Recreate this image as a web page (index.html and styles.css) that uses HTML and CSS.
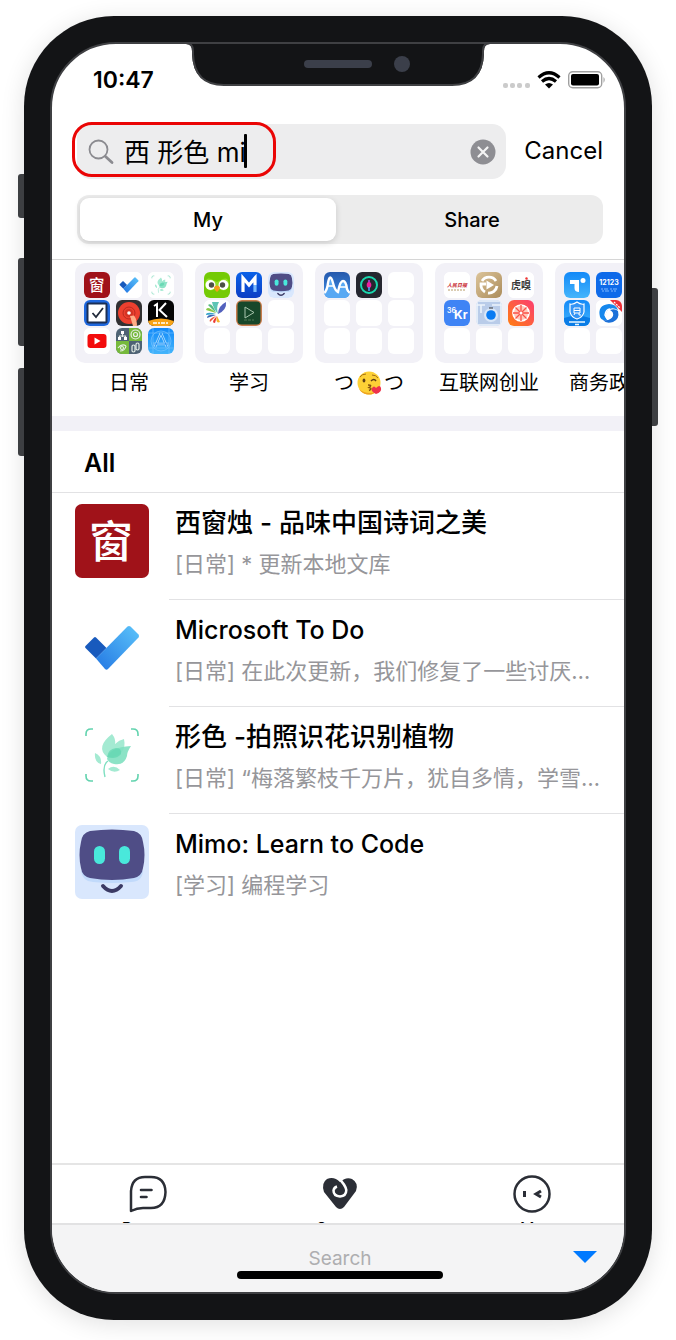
FILE: index.html
```html
<!DOCTYPE html>
<html lang="zh-CN">
<head>
<meta charset="utf-8">
<meta name="viewport" content="width=device-width, initial-scale=1">
<title>Search</title>
<link rel="stylesheet" href="styles.css">
</head>
<body>
<svg class="defs" aria-hidden="true">
  <defs>
    <linearGradient id="g-check" x1="0" y1="1" x2="1" y2="0"><stop offset="0" stop-color="#2377e3"/><stop offset="1" stop-color="#5cc4fa"/></linearGradient>
    <linearGradient id="g-blue" x1="0" y1="0" x2="0" y2="1"><stop offset="0" stop-color="#0b62e8"/><stop offset="1" stop-color="#0c3ec4"/></linearGradient>
    <linearGradient id="g-sky" x1="0" y1="0" x2="0" y2="1"><stop offset="0" stop-color="#1289f8"/><stop offset="1" stop-color="#45b5fb"/></linearGradient>
    <linearGradient id="g-gold" x1="0" y1="0" x2="1" y2="1"><stop offset="0" stop-color="#dcc49a"/><stop offset="1" stop-color="#ab8c5b"/></linearGradient>
    <linearGradient id="g-orange" x1="1" y1="0" x2="0" y2="1"><stop offset="0" stop-color="#fc3d71"/><stop offset="1" stop-color="#ff7e12"/></linearGradient>
    <linearGradient id="g-navy" x1="0" y1="0" x2="0" y2="1"><stop offset="0" stop-color="#2558ab"/><stop offset="1" stop-color="#3f91ea"/></linearGradient>
  </defs>
  <symbol id="i-window" viewBox="0 0 74 74">
    <rect width="74" height="74" rx="7" fill="#a01219"/>
    <text class="seal" x="36" y="54" text-anchor="middle">窗</text>
  </symbol>
  <symbol id="i-todo" viewBox="0 0 74 74">
    <rect width="74" height="74" rx="7" fill="#fff"/>
    <g transform="translate(0 6)">
      <path d="M10.500 31q-1-1 0-2l8.500-8.500q1-1 2 0L31.500 31 21 41.500z" fill="#185abd"/>
      <path d="M21 41.500 52.500 9.500q1.500-1.200 3 0l8 8q1.200 1.500 0 3L33 52q-1.500 1.500-3 0z" fill="url(#g-check)"/>
    </g>
  </symbol>
  <symbol id="i-flower" viewBox="0 0 74 74">
    <rect width="74" height="74" rx="7" fill="#fff"/>
    <path d="M11 18v-2q0-5 5-5h2M56 11h2q5 0 5 5v2M11 56v2q0 5 5 5h2M56 63h2q5 0 5-5v-2" fill="none" stroke="#62d3ae" stroke-width="1.600"/>
    <path d="M32 39Q20 29 37 16q4 5 3 10 4-4 9-5 2 9-3 14-6 5-14 4z" fill="#a4ead2"/>
    <path d="M32 41Q34 29 56 28q-4 6-4 10-3 10-13 8-5-1-7-5z" fill="#7fe0c0" opacity=".9"/>
    <path d="M32 39q1-8 9-9 6 0 5 6-5 6-14 3z" fill="#5fd6af" opacity=".7"/>
    <path d="M33 43Q27 47 30 59" fill="none" stroke="#7edfc0" stroke-width="1.400"/>
    <path d="M20 35q7 3 6 11-7-2-6-11zM33 51q6-5 12 1-6 4-12-1z" fill="#a4ead2"/>
  </symbol>
  <symbol id="i-mimo" viewBox="0 0 74 74">
    <rect width="74" height="74" rx="7" fill="#d9e7fd"/>
    <path d="M6 46h62q-1 11-12 11-19 2-38 0Q8 57 6 46z" fill="#c1dafb"/>
    <path d="M15 6Q37 3 59 6 67 8 68 17 71 30 68 43 67 51 59 53 37 57 15 53 7 51 6 43 3 30 6 17 7 8 15 6z" fill="#4f4d86"/>
    <rect x="19" y="21" width="11" height="18" rx="5.500" fill="#49e8db"/>
    <rect x="44" y="21" width="11" height="18" rx="5.500" fill="#49e8db"/>
    <path d="M28 61q9 10 18 0" fill="none" stroke="#3b3a64" stroke-width="4" stroke-linecap="round"/>
  </symbol>
</svg>

<div class="phone">
  <i class="key key-mute"></i><i class="key key-up"></i><i class="key key-down"></i><i class="key key-power"></i>
  <div class="screen">
    <svg class="notch" viewBox="0 0 308 46" aria-hidden="true">
      <path d="M0 0V2H2Q8 2 8 9V12Q9 43 40 43H268Q299 43 300 12V9Q300 2 306 2H308V0z" fill="#131416"/>
      <path d="M0 1H2Q9 1 9 9V12Q10 43 40 43H268Q298 43 299 12V9Q299 1 306 1H308" fill="none" stroke="#3f4043" stroke-width="2"/>
      <rect x="120" y="18" width="68" height="8" rx="4" fill="#3b3f4a"/>
      <circle cx="218" cy="22" r="8" fill="#3b3f4a"/>
    </svg>

    <header class="status">
      <time>10:47</time>
      <svg width="104" height="20" viewBox="0 0 104 20" role="img" aria-label="Wi-Fi, battery full">
        <g fill="#cbcbcb"><rect x="0" y="13" width="5" height="5" rx="2"/><rect x="7" y="13" width="5" height="5" rx="2"/><rect x="14" y="13" width="5" height="5" rx="2"/><rect x="22" y="13" width="5" height="5" rx="2"/></g>
        <g fill="none" stroke="#000" stroke-width="3.200"><path d="M35.500 7.500Q46-2 56.500 7.500"/><path d="M39 11.500q7-6 14 0"/></g>
        <path d="M42 14.500q4-3 8 0L46 18.500z"/>
        <rect x="65.700" y="1.700" width="33" height="16" rx="4" fill="none" stroke="#a0a0a0" stroke-width="1.400"/>
        <rect x="68" y="4" width="28" height="11.500" rx="2"/>
        <path d="M100.500 7q2.500 2.500 0 6z" fill="#a0a0a0"/>
      </svg>
    </header>

    <form class="search" onsubmit="return false">
      <div class="field">
        <svg width="26" height="26" viewBox="0 0 26 26" fill="none" stroke="#8b8b90" aria-hidden="true"><circle cx="10.500" cy="10.500" r="9" stroke-width="1.800"/><path d="m17.500 17.500 6.500 6" stroke-width="2.800" stroke-linecap="round"/></svg>
        <input class="query" type="text" value="西 形色 mi" aria-label="Search apps">
        <button class="clear" type="button" aria-label="Clear"><svg width="26" height="26" viewBox="0 0 26 26"><circle cx="13" cy="13" r="12.500" fill="#8e8e93"/><path d="m8.500 8.500 9 9m0-9-9 9" stroke="#f4f4f4" stroke-width="2.200" stroke-linecap="round"/></svg></button>
        <i class="caret"></i>
        <i class="mark"></i>
      </div>
      <button class="cancel" type="button">Cancel</button>
    </form>

    <div class="segments">
      <button class="segment selected" type="button" aria-pressed="true">My</button>
      <button class="segment" type="button" aria-pressed="false">Share</button>
    </div>

    <nav class="folders" aria-label="Folders">
      <button class="folder" type="button">
        <span class="tiles">
          <svg><use href="#i-window"/></svg>
          <svg><use href="#i-todo"/></svg>
          <svg><use href="#i-flower"/></svg>
          <svg viewBox="0 0 26 26"><rect width="26" height="26" fill="#1e67dd"/><rect x="3.500" y="3.500" width="19" height="19" rx="1" fill="#fff" stroke="#1b2f55" stroke-width="2"/><path d="m8.500 13 3.500 4 7-9" fill="none" stroke="#222b3b" stroke-width="1.800"/></svg>
          <svg viewBox="0 0 26 26"><rect width="26" height="26" fill="#313032"/><circle cx="13" cy="13" r="11" fill="#ec402f"/><circle cx="13" cy="13" r="6" fill="none" stroke="#b92a20"/><circle cx="13" cy="13" r="4" fill="#d23325"/><circle cx="13" cy="13" r="1.800" fill="#fff"/><path d="m14 16 4-.5q3 4 3 10.500h-4z" fill="#ffae87"/></svg>
          <svg viewBox="0 0 26 26"><rect width="26" height="26" fill="#050505"/><path d="M6 6 9 4V17M18 3l-6.500 7L19 17" fill="none" stroke="#fff" stroke-width="2"/><path d="M0 21q13-5 26 0v5H0z" fill="#f8a417"/><path d="M5 23h16" stroke="#fff" stroke-width="1.500" stroke-dasharray="4 1 2 1"/></svg>
          <svg viewBox="0 0 26 26"><rect width="26" height="26" fill="#fff"/><rect x="3.500" y="6" width="19" height="14" rx="3" fill="#f30c0c"/><path d="m10.500 9.500 6 3.500-6 3.500z" fill="#fff"/></svg>
          <svg viewBox="0 0 26 26"><rect width="26" height="26" fill="#4e6274"/><path d="M13 0h13v13H13zM0 13h13v13H0z" fill="#76b93c"/><g fill="none" stroke="#e6eee6" stroke-width="1.200"><path d="M6.500 5v4M3.500 10V8h6v2"/><circle cx="19.500" cy="6.500" r="4.500"/><circle cx="19.500" cy="6.500" r="2"/><path d="M2 20q4-5 8-2M4 23q5 0 6-5"/><circle cx="6" cy="20" r="1.500"/><rect x="16" y="17" width="3" height="7" rx="1.500"/><rect x="20" y="15" width="3" height="7" rx="1.500"/></g><path d="M5 3h3v3H5zM2 9h3v3H2zM8 9h3v3H8z" fill="#fff"/></svg>
          <svg viewBox="0 0 26 26"><rect width="26" height="26" fill="url(#g-sky)"/><path d="M0 5h26M0 20h26M5 0v26M21 0v26" stroke="#78c4ff" stroke-width=".6"/><circle cx="13" cy="13" r="10" fill="none" stroke="#78c4ff" stroke-width=".7"/><path d="M13 5 7 19M13 5l6 14M5 16h16" fill="none" stroke="#a9dcff" stroke-width="2.600"/><path d="M13 5 7 19M13 5l6 14M5 16h16" fill="none" stroke="#2792f5"/></svg>
        </span>
        <span class="name">日常</span>
      </button>

      <button class="folder" type="button">
        <span class="tiles">
          <svg viewBox="0 0 26 26"><rect width="26" height="26" fill="#74ca05"/><path d="M1 12Q2 5 7 7l6 3 6-3q5-2 6 5-1 8-8 6l-4-2-4 2q-7 2-8-6z" fill="#95e126"/><circle cx="6.500" cy="13" r="5" fill="#fff"/><circle cx="19.500" cy="13" r="5" fill="#fff"/><circle cx="7.500" cy="13" r="2.700" fill="#4b5145"/><circle cx="18.500" cy="13" r="2.700" fill="#4b5145"/><path d="M10 15q3-3 6 0l-1 3-2 2-2-2z" fill="#f89b1c"/></svg>
          <svg viewBox="0 0 26 26"><rect width="26" height="26" fill="url(#g-blue)"/><path d="M7 20V6l6 7 6-7v7" fill="none" stroke="#fff" stroke-width="3.200"/><path d="M19 13v7" stroke="#79b9ff" stroke-width="3.200"/></svg>
          <svg><use href="#i-mimo"/></svg>
          <svg viewBox="0 0 26 26"><rect width="26" height="26" fill="#fff"/><path d="M8 2h7q-3 5-1 12Q9 8 8 2z" fill="#5dc5b5"/><path d="M14 14q0-8 8-12 1 8-8 12z" fill="#5361bd"/><path d="M12 13 4 5q4-3 8 8z" fill="#56bc83"/><path d="m12 13-10-3q1-5 10 3z" fill="#89c947"/><path d="m12 14-10 1q0-4 10-1z" fill="#36a4cb"/><path d="m12 15-9 3q0-4 9-3z" fill="#3a66b5"/><path d="m12 16-6 6q-2-3 6-6z" fill="#ed563b"/><path d="m13 16-2 7q-5 0 2-7z" fill="#ec3832"/><path d="m13 16 3 6q-5 2-3-6z" fill="#f4b32f"/></svg>
          <svg viewBox="0 0 26 26"><rect width="26" height="26" fill="#c87c4c"/><rect x="1.500" y="1.500" width="23" height="23" rx="4" fill="#17472a"/><path d="M9 7v11l9-5.500z" fill="none" stroke="#a8c5ad"/><path d="M8 20h10" stroke="#537a57" stroke-dasharray="3 1"/></svg>
          <i></i><i></i><i></i><i></i>
        </span>
        <span class="name">学习</span>
      </button>

      <button class="folder" type="button">
        <span class="tiles">
          <svg viewBox="0 0 26 26"><rect width="26" height="26" fill="url(#g-navy)"/><path d="M0 21q3 0 4-9 2-12 5 0 2 9 5 9 2-13 5-12 3-1 4 12h3v5H0z" fill="#58a8f3"/><path d="M0 21Q3 19 4 11q2-11 5 0 2 8 5 9 2-11 5-11t4 8q1 3 3 4" fill="none" stroke="#fff" stroke-width="2.400"/><path d="M4 14h6M16 15h7" stroke="#fff" stroke-width="1.300"/></svg>
          <svg viewBox="0 0 26 26"><rect width="26" height="26" fill="#25262f"/><circle cx="13" cy="13" r="8" fill="none" stroke="#19d7ae" stroke-width="2"/><path d="M13 8v4" stroke="#b04bec" stroke-width="1.500"/><ellipse cx="13" cy="13" rx="2.300" ry="3" fill="#ed209b"/><path d="M13 15v4" stroke="#4aa5ff" stroke-width="1.500"/></svg>
          <i></i><i></i><i></i><i></i><i></i><i></i><i></i>
        </span>
        <span class="name">つ<svg class="kiss" viewBox="0 0 26 26" role="img" aria-label="😘"><circle cx="13" cy="13" r="11.500" fill="#fdd136"/><path d="M3 19a11.500 11.500 0 0 0 17 3Q10 25 3 19z" fill="#eea321"/><path d="M4 7q2-3 6-3M16 5q4 0 6 3" fill="none" stroke="#a46d15"/><ellipse cx="8" cy="10.500" rx="1.400" ry="2" fill="#5f3f18"/><path d="M15 11q3-3 5 0" fill="none" stroke="#5f3f18" stroke-width="1.500"/><path d="M12 15q5 0 1 2.500 4 1 0 3" fill="none" stroke="#83500e" stroke-width="1.400"/><path d="M20 24q-6-3-4-6t4 0q4-4 5 0t-5 6z" fill="#ee334c"/></svg>つ</span>
      </button>

      <button class="folder" type="button">
        <span class="tiles">
          <svg viewBox="0 0 26 26"><rect width="26" height="26" fill="#fff"/><text class="brush" x="13" y="15" text-anchor="middle">人民日报</text><path d="M4 18h18" stroke="#b79b69" stroke-dasharray="2 1"/></svg>
          <svg viewBox="0 0 26 26"><rect width="26" height="26" fill="url(#g-gold)"/><path d="M6 9a8.300 8.300 0 0 1 14 0M21 14a8.300 8.300 0 0 1-9 7M9 20a8.300 8.300 0 0 1-4-8h5" fill="none" stroke="#fff" stroke-width="2.800"/><path d="m10.500 8.500 7.500 4.500-7.500 4.500z" fill="#fff"/></svg>
          <svg viewBox="0 0 26 26"><rect width="26" height="26" fill="#fff"/><text class="tiger" x="13" y="17" text-anchor="middle">虎嗅</text><circle cx="18.500" cy="6.500" r="1.200" fill="#e33"/></svg>
          <svg viewBox="0 0 26 26"><rect width="26" height="26" fill="#3f84f5"/><text class="kr-small" x="3" y="13">36</text><text class="kr" x="10" y="19">Kr</text></svg>
          <svg viewBox="0 0 26 26"><rect width="26" height="26" fill="#b9cce9"/><path d="M0 5h9M16 5h10M5 5v8M1 1h24v24H1z" fill="none" stroke="#edf4fc" stroke-width="1.600"/><circle cx="15" cy="15" r="7" fill="#dae7f8"/><circle cx="15" cy="15" r="4.800" fill="#097bf2"/><path d="M13 8h4" stroke="#333" /></svg>
          <svg viewBox="0 0 26 26"><rect width="26" height="26" fill="url(#g-orange)"/><circle cx="13" cy="13" r="8" fill="#ffc9bb" stroke="#fff" stroke-width="1.700"/><path d="M13 5v16M5 13h16M7.500 7.500l11 11m0-11-11 11" stroke="#fa5148" stroke-width="1.300"/><circle cx="13" cy="13" r="1.500" fill="#fff"/></svg>
          <i></i><i></i><i></i>
        </span>
        <span class="name">互联网创业</span>
      </button>

      <button class="folder" type="button">
        <span class="tiles">
          <svg viewBox="0 0 26 26"><rect width="26" height="26" fill="url(#g-sky)"/><path d="M6 8h9v4H6zM10.500 9h4.500v11q-4.500 0-4.500-4z" fill="#fff"/><circle cx="19" cy="8.500" r="2.500" fill="#fff"/></svg>
          <svg viewBox="0 0 26 26"><rect width="26" height="26" fill="#0e6ae9"/><text class="digits" x="13" y="13" text-anchor="middle">12123</text><path d="M5 17h16M6 19h14" stroke="#80b8ff" stroke-dasharray="2 1 4 2"/></svg>
          <i></i>
          <svg viewBox="0 0 26 26"><rect width="26" height="26" fill="url(#g-sky)"/><path d="M0 18q13-5 26 0v8H0z" fill="#0a7ce6"/><path d="M13 2q4 3 7 2v8q-1 5-7 7-6-2-7-7V4q3 1 7-2z" fill="#3394f5" stroke="#fff" stroke-width="1.200"/><path d="M10 8h6v5h-6zM10 10.500h6M11 13l-1 2M15 13v2h2" fill="none" stroke="#fff"/><path d="M5 22h16M11 24.500h4" stroke="#e9f6ff" stroke-width="1.600"/></svg>
          <svg viewBox="0 0 26 26"><rect width="26" height="26" fill="#fff"/><path d="M4 17Q1 5 13 4q7 0 9 6-7-4-11 1-3 4 0 9-5 1-7-3z" fill="#1688ed"/><path d="M22 11q2 8-5 11-7 2-10-2 8 1 10-4 1-4-3-6 5-2 8 1z" fill="#1c71d9"/><path d="M14 9q-4 0-5 6 1 3 3 4" fill="none" stroke="#fff" stroke-width="1.500"/><path d="M14 0h12v12z" fill="#ed3039"/><path d="m18 2 6 6" stroke="#fff" stroke-width="1.300" stroke-dasharray="2 1"/></svg>
          <i></i><i></i><i></i><i></i>
        </span>
        <span class="name">商务政务</span>
      </button>
    </nav>

    <main class="results">
      <h1>All</h1>
      <ul>
        <li>
          <svg class="app"><use href="#i-window"/></svg>
          <div class="info"><h2>西窗烛 - 品味中国诗词之美</h2><p>[日常] * 更新本地文库</p></div>
        </li>
        <li>
          <svg class="app"><use href="#i-todo"/></svg>
          <div class="info"><h2 class="latin">Microsoft To Do</h2><p>[日常] 在此次更新，我们修复了一些讨厌…</p></div>
        </li>
        <li>
          <svg class="app"><use href="#i-flower"/></svg>
          <div class="info"><h2>形色 -拍照识花识别植物</h2><p>[日常] “梅落繁枝千万片，犹自多情，学雪…</p></div>
        </li>
        <li>
          <svg class="app"><use href="#i-mimo"/></svg>
          <div class="info"><h2 class="latin">Mimo: Learn to Code</h2><p>[学习] 编程学习</p></div>
        </li>
      </ul>
    </main>

    <nav class="tabs" aria-label="Sections">
      <a href="#recent"><svg width="40" height="40" viewBox="0 0 40 40" fill="none" stroke="#2b2e36"><path d="M3 37V17Q4 3 17 3h6Q37 3 37.500 18 37 34 23 34h-8q-6 0-12 3z" stroke-width="2.500" stroke-linejoin="round"/><path d="M13 16h10.500M13 23h5.500" stroke-width="2.600" stroke-linecap="round"/></svg><span>Recent</span></a>
      <a href="#space"><svg width="40" height="40" viewBox="0 0 40 40"><path d="M20 8Q26 2.500 32 5q7 4 4 12L24 33q-4 4-8 0L4 18Q1 9 7 5q7-3 13 3z" fill="#2b2e36"/><path d="M18 3.500Q25.500 11 26.300 16q0 6-6.300 6.500-6.500-.5-6.500-6 .5-3 3.500-4" fill="none" stroke="#fff" stroke-width="2.500"/></svg><span>Space</span></a>
      <a href="#me"><svg width="40" height="40" viewBox="0 0 40 40" fill="none" stroke="#2b2e36"><circle cx="20" cy="20" r="17.500" stroke-width="2.500"/><path d="M12.500 17v6" stroke-width="3"/><path d="m29 17-5 3 5 3" stroke-width="3"/></svg><span>Me</span></a>
    </nav>

    <footer class="toolbar">
      <span class="hint">Search</span>
      <button class="dismiss" type="button" aria-label="Hide keyboard"><svg width="24" height="12" viewBox="0 0 24 12"><path d="M0 0h24L12 12z" fill="#007aff"/></svg></button>
      <i class="home"></i>
    </footer>
  </div>
</div>
</body>
</html>
```
FILE: styles.css
```css
* { box-sizing: border-box; }

body {
  margin: 0;
  min-height: 100vh;
  display: flex;
  flex-direction: column;
  padding: 16px 24px 20px;
  background: #fff;
  color: #000;
  font-family: Inter, "Noto Sans CJK SC", sans-serif;
}

button, input { font: inherit; color: inherit; border: 0; padding: 0; background: none; }
h1, h2, p, ul { margin: 0; padding: 0; }

.defs { position: absolute; width: 0; height: 0; }

.phone {
  position: relative;
  flex: 1;
  display: flex;
  padding: 26px;
  border-radius: 90px;
  background: #131416;
  box-shadow: 0 4px 24px rgba(0, 0, 0, 0.12);
}

.key { position: absolute; width: 6px; background: #3d3f42; border-radius: 3px 0 0 3px; left: -6px; }
.key-mute { top: 158px; height: 44px; }
.key-up { top: 242px; height: 88px; }
.key-down { top: 352px; height: 88px; }
.key-power { top: 272px; height: 138px; left: auto; right: -6px; border-radius: 0 3px 3px 0; }

.screen {
  position: relative;
  flex: 1;
  min-width: 0;
  display: flex;
  flex-direction: column;
  overflow: hidden;
  border: 2px solid #3f4043;
  border-radius: 66px;
  background: #fff;
}

.notch { position: absolute; top: -2px; left: 50%; width: 308px; height: 46px; margin-left: -154px; }

.status {
  height: 80px;
  padding: 24px 17px 0 41px;
  display: flex;
  justify-content: space-between;
  align-items: flex-start;
}
.status time { font-size: 23px; line-height: 24px; font-weight: 600; }
.status svg { margin-top: 2px; }

.search { display: flex; align-items: center; gap: 18px; padding: 0 21px 0 25px; }
.field {
  position: relative;
  flex: 1;
  min-width: 0;
  height: 55px;
  display: flex;
  align-items: center;
  gap: 10px;
  padding: 0 10px 0 11px;
  border-radius: 14px;
  background: #ededee;
}
.query { flex: 1; min-width: 0; height: 40px; padding-bottom: 3px; font-size: 26px; outline: 0; }
.clear { height: 26px; }
.clear svg { display: block; }
.caret { position: absolute; left: 167px; top: 10px; width: 3px; height: 34px; background: #000; border-radius: 1px; }
.mark { position: absolute; left: -5px; top: -2px; width: 204px; height: 55px; border: 3px solid #ea0505; border-radius: 20px; }
.cancel { padding-bottom: 2px; font-size: 24px; }

.segments {
  display: flex;
  gap: 8px;
  height: 49px;
  margin: 16px 21px 15px 25px;
  padding: 3px;
  border-radius: 12px;
  background: #ececec;
}
.segment { flex: 1; font-size: 20px; font-weight: 500; border-radius: 9px; }
.selected { background: #fff; box-shadow: 0 2px 6px rgba(0, 0, 0, 0.15); }

.folders {
  display: flex;
  gap: 12px;
  height: 172px;
  padding: 3px 0 0 23px;
  overflow: hidden;
  border-top: 1px solid #d6d6d6;
  border-bottom: 15px solid #f2f1f7;
}
.folder { flex: none; width: 108px; display: flex; flex-direction: column; align-items: center; }
.tiles {
  width: 108px;
  height: 100px;
  padding: 9px;
  display: grid;
  grid-template-columns: repeat(3, 26px);
  grid-auto-rows: 26px;
  gap: 2px 6px;
  border-radius: 10px;
  background: #f2f1f7;
}
.tiles svg, .tiles i { display: block; width: 26px; height: 26px; border-radius: 6px; overflow: hidden; background: #fff; }
.name { display: flex; align-items: center; gap: 2px; margin-top: 4px; font-size: 20px; line-height: 32px; white-space: nowrap; }
.kiss { width: 26px; height: 26px; }

.results { flex: 1; }
.results h1 { height: 62px; padding-left: 32px; font-size: 25px; line-height: 64px; font-weight: 600; border-bottom: 1px solid #e2e2e4; }
.results ul { list-style: none; }
.results li { display: flex; height: 107px; padding-left: 23px; gap: 20px; }
.app { flex: none; width: 74px; height: 74px; margin-top: 11px; }
.info { flex: 1; min-width: 0; padding: 10px 16px 0 6px; border-bottom: 1px solid #e2e2e4; }
li:last-child .info { border-bottom: 0; }
.info h2 { font-size: 26px; line-height: 40px; font-weight: 500; white-space: nowrap; }
.info .latin { font-size: 25px; }
.info p { font-size: 22px; line-height: 42px; color: #96969a; white-space: nowrap; overflow: hidden; text-overflow: ellipsis; }

.tabs {
  display: flex;
  height: 60px;
  margin-right: -4px;
  padding-top: 9px;
  overflow: hidden;
  border-top: 2px solid #e5e5e5;
}
.tabs a { flex: 1; display: flex; flex-direction: column; align-items: center; color: #000; text-decoration: none; font-size: 16px; line-height: 20px; }
.tabs svg { flex: none; margin-bottom: 4px; }

.toolbar {
  position: relative;
  height: 69px;
  padding-left: 4px;
  display: flex;
  align-items: center;
  justify-content: center;
  border-top: 2px solid #e2e2e3;
  background: #f4f4f5;
}
.hint { font-size: 19px; color: #aeaeb0; }
.dismiss { position: absolute; right: 27px; top: 26px; height: 12px; }
.dismiss svg { display: block; }
.home { position: absolute; left: 50%; bottom: 13px; width: 206px; height: 8px; margin-left: -101px; border-radius: 4px; background: #000; }

.seal { fill: #fff; font: 500 44px "Noto Sans CJK SC", sans-serif; }
.brush { fill: #c7252e; font: italic 700 5px "Noto Sans CJK SC", sans-serif; }
.tiger { fill: #3a3a3a; font: 700 10px "Noto Sans CJK SC", sans-serif; }
.kr { fill: #fff; font: 700 12px Inter, sans-serif; }
.kr-small { fill: #fff; font: 600 7px Inter, sans-serif; }
.digits { fill: #fff; font: 700 7px Inter, sans-serif; }
```
